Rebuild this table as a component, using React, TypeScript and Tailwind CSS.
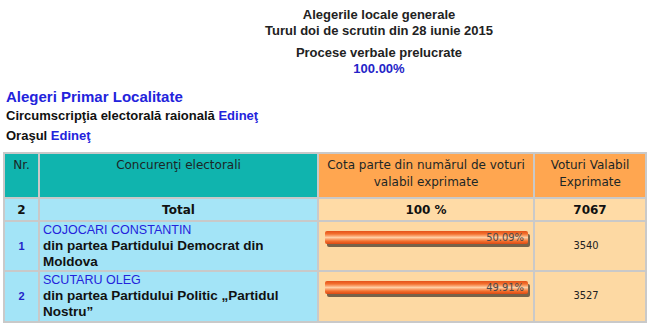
import React from "react";

const arial = { fontFamily: '"Liberation Sans", Arial, sans-serif' };

function Bar({ pct }: { pct: string }) {
  return (
    <div className="relative ml-[6px] mr-[3px] h-[16px]">
      <div className="absolute left-[2px] top-[3px] right-0 h-[13px] bg-[#76634a] rounded-[2px]" />
      <div className="absolute left-0 top-0 right-[2px] h-[13px] rounded-[2px] bg-[linear-gradient(to_bottom,#e4521a_0%,#f36f2c_22%,#ffcfa4_50%,#f36f2c_78%,#dc4a14_100%)] flex items-center justify-end pr-[4px]">
        <span className="text-[11px] leading-none text-[#4a4a4a] font-['DejaVu_Sans_Condensed','DejaVu_Sans',sans-serif]">
          {pct}
        </span>
      </div>
    </div>
  );
}

export default function App() {
  const cell = "border-2 border-[#c9c9c9]";
  const tah = "font-['DejaVu_Sans',sans-serif]";
  return (
    <div className="w-[650px] h-[326px] overflow-hidden bg-white" style={arial}>
      <div className="pl-[108px] pt-[7px] text-center font-bold text-[13px] leading-[16px] text-[#222]">
        <div>Alegerile locale generale</div>
        <div>Turul doi de scrutin din 28 iunie 2015</div>
        <div className="mt-[6px]">Procese verbale prelucrate</div>
        <div className="text-[#2424c8]">100.00%</div>
      </div>
      <div className="pl-[6px]">
        <div className="mt-[11px] text-[15px] leading-[18px] font-bold text-[#2323dc]">Alegeri Primar Localitate</div>
        <div className="mt-[2px] text-[13px] leading-[16px] font-bold text-[#111]">
          Circumscripţia electorală raională <span className="text-[#2323dc]">Edineţ</span>
        </div>
        <div className="mt-[4px] text-[13px] leading-[16px] font-bold text-[#111]">
          Oraşul <span className="text-[#2323dc]">Edineţ</span>
        </div>
      </div>
      <table className="mt-[8px] ml-[3px] w-[642px] border-collapse table-fixed">
        <colgroup>
          <col className="w-[35px]" />
          <col className="w-[279px]" />
          <col className="w-[216px]" />
          <col className="w-[112px]" />
        </colgroup>
        <thead>
          <tr className={`h-[45px] text-[12px] leading-[17px] text-[#1c2626] ${tah}`}>
            <th className={`${cell} bg-[#10b4ae] font-normal align-top pt-[3px]`}>Nr.</th>
            <th className={`${cell} bg-[#10b4ae] font-normal align-top pt-[3px]`}>Concurenţi electorali</th>
            <th className={`${cell} bg-[#ffa650] font-normal align-top pt-[3px]`}>
              Cota parte din numărul de voturi valabil exprimate
            </th>
            <th className={`${cell} bg-[#ffa650] font-normal align-top pt-[3px]`}>Voturi Valabil Exprimate</th>
          </tr>
        </thead>
        <tbody>
          <tr className={`h-[23px] text-[12px] font-bold text-[#111] text-center ${tah}`}>
            <td className={`${cell} bg-[#a6e5f7]`}>2</td>
            <td className={`${cell} bg-[#a6e5f7]`}>Total</td>
            <td className={`${cell} bg-[#ffdba6]`}>100 %</td>
            <td className={`${cell} bg-[#ffdba6]`}>7067</td>
          </tr>
          {[
            { nr: "1", name: "COJOCARI CONSTANTIN", party: "din partea Partidului Democrat din Moldova", pct: "50.09%", v: "3540", h: "h-[49px]" },
            { nr: "2", name: "SCUTARU OLEG", party: "din partea Partidului Politic „Partidul Nostru”", pct: "49.91%", v: "3527", h: "h-[51px]" },
          ].map((r) => (
            <tr key={r.nr} className={r.h}>
              <td className={`${cell} bg-[#a3e4f7] text-center text-[11px] font-bold text-[#2323c8]`}>{r.nr}</td>
              <td className={`${cell} bg-[#a3e4f7] pl-[3px] pr-[6px] align-top leading-[16px]`}>
                <div className="text-[12.5px] text-[#2323dc]">{r.name}</div>
                <div className="text-[13.5px] font-bold text-[#111]">{r.party}</div>
              </td>
              <td className={`${cell} bg-[#fdd9a3] align-top pt-[9px]`}>
                <Bar pct={r.pct} />
              </td>
              <td className={`${cell} bg-[#fdd9a3] text-center pr-[8px] text-[11px] text-[#222] font-['DejaVu_Sans_Condensed','DejaVu_Sans',sans-serif]`}>{r.v}</td>
            </tr>
          ))}
        </tbody>
      </table>
    </div>
  );
}
